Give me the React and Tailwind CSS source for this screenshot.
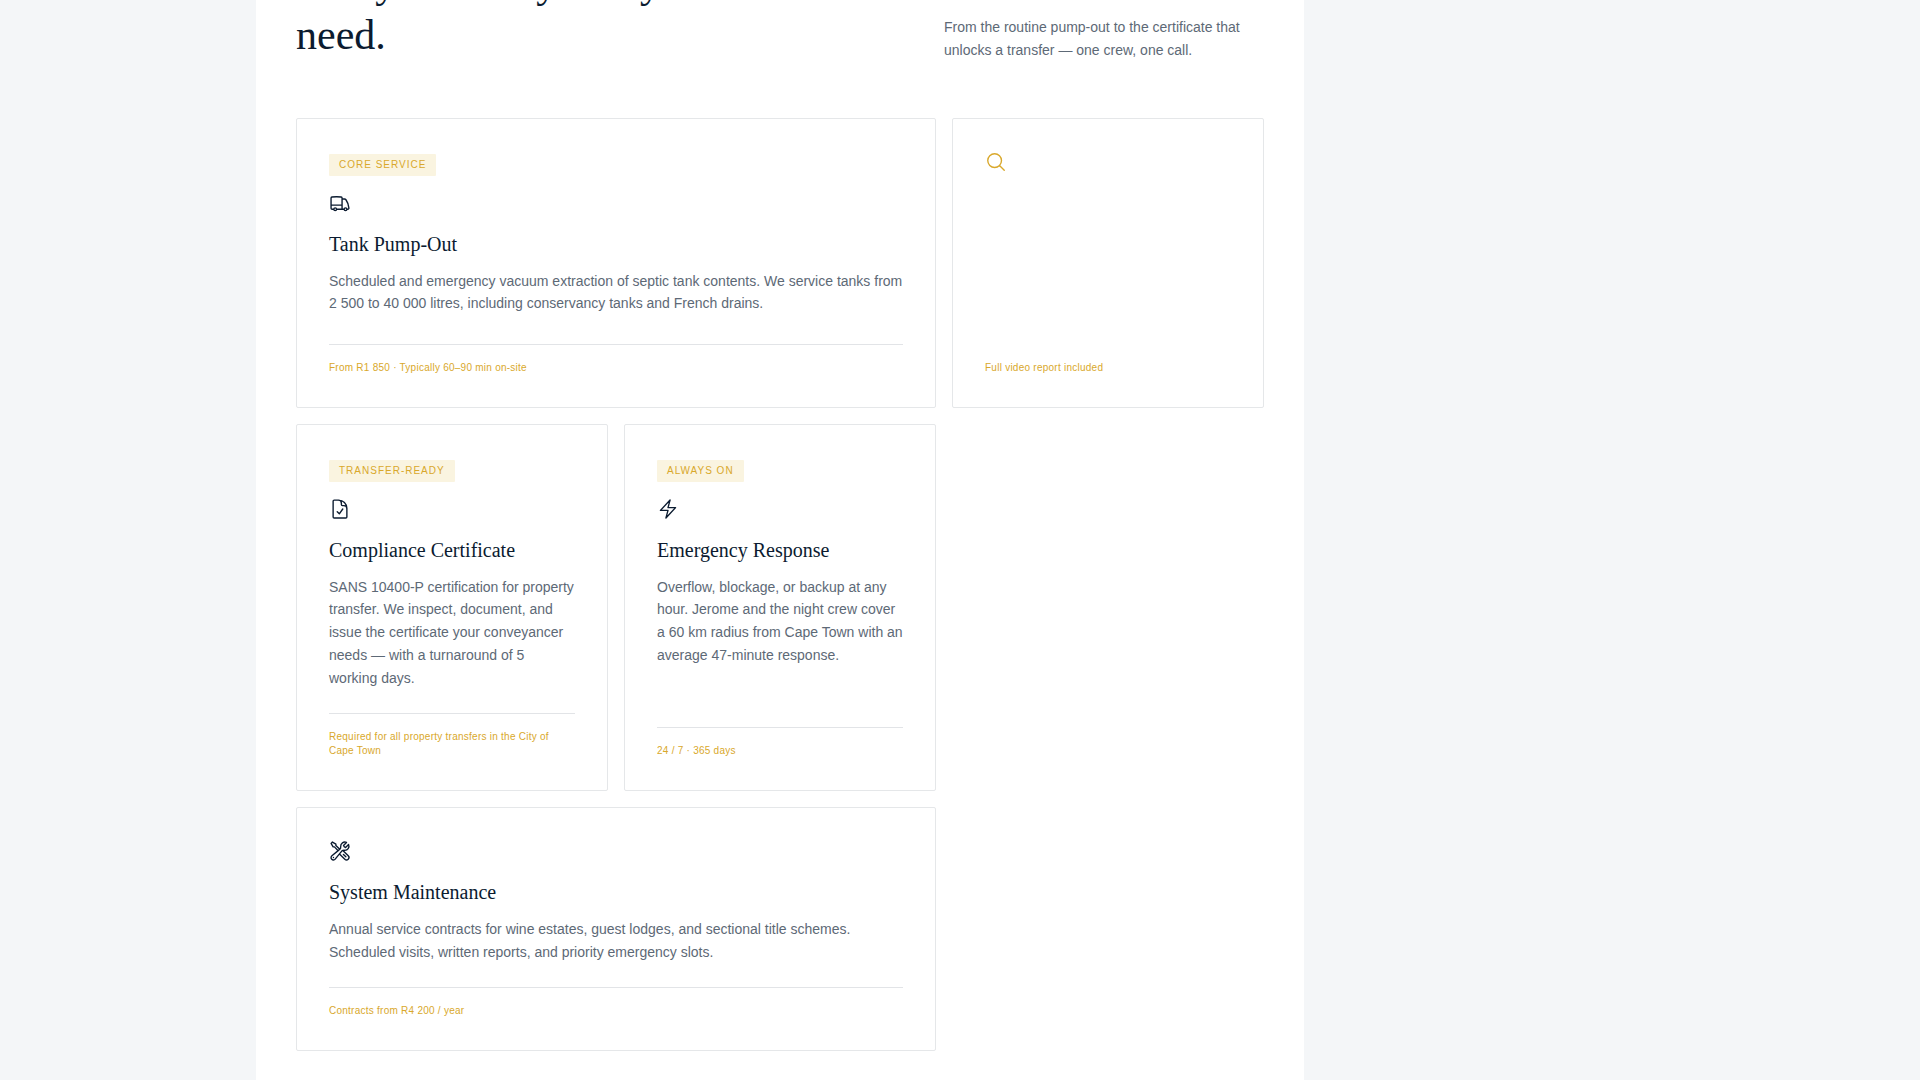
import {
  HiOutlineBolt,
  HiOutlineDocumentCheck,
  HiOutlineMagnifyingGlass,
  HiOutlineTruck,
  HiOutlineWrenchScrewdriver,
} from 'react-icons/hi2';

const services = [
  {
    tag: 'Core service',
    icon: HiOutlineTruck,
    title: 'Tank Pump-Out',
    desc: 'Scheduled and emergency vacuum extraction of septic tank contents. We service tanks from 2 500 to 40 000 litres, including conservancy tanks and French drains.',
    meta: 'From R1 850 · Typically 60–90 min on-site',
    span: 'col-span-2 min-h-[290px]',
  },
  {
    icon: HiOutlineMagnifyingGlass,
    meta: 'Full video report included',
    accent: true,
  },
  {
    tag: 'Transfer-ready',
    icon: HiOutlineDocumentCheck,
    title: 'Compliance Certificate',
    desc: 'SANS 10400-P certification for property transfer. We inspect, document, and issue the certificate your conveyancer needs — with a turnaround of 5 working days.',
    meta: 'Required for all property transfers in the City of Cape Town',
  },
  {
    tag: 'Always on',
    icon: HiOutlineBolt,
    title: 'Emergency Response',
    desc: 'Overflow, blockage, or backup at any hour. Jerome and the night crew cover a 60 km radius from Cape Town with an average 47-minute response.',
    meta: '24 / 7 · 365 days',
  },
  {
    icon: HiOutlineWrenchScrewdriver,
    title: 'System Maintenance',
    desc: 'Annual service contracts for wine estates, guest lodges, and sectional title schemes. Scheduled visits, written reports, and priority emergency slots.',
    meta: 'Contracts from R4 200 / year',
    span: 'col-span-2 col-start-1',
  },
];

const ServiceCard = ({ tag, icon: Icon, title, desc, meta, accent, span = '' }) => (
  <article className={`flex flex-col p-8 rounded-xs border border-[#e5e7e9] ${span}`}>
    {tag && (
      <div className="flex pt-[3px] mb-4">
        <span className="px-2.5 py-[5px] rounded-[1px] bg-[#faf4e0] text-[10px] leading-3 uppercase tracking-widest text-[#d9a82b]">
          {tag}
        </span>
      </div>
    )}
    <Icon className={`size-[22px] shrink-0 ${accent ? 'text-[#d9a82b]' : 'text-[#0b1b30]'}`} />
    {title && (
      <h3 className="mt-[17px] font-['Liberation_Serif',serif] text-xl leading-snug text-[#0b1b30]">{title}</h3>
    )}
    {desc && <p className="mt-[11px] mb-6 text-sm leading-relaxed text-[#5d6976]">{desc}</p>}
    <div className={`mt-auto pt-4 border-t text-[10px] leading-[14px] tracking-wide text-[#d9a82b] ${accent ? 'border-transparent' : 'border-[#e2e4e7]'}`}>
      {meta}
    </div>
  </article>
);

const App = () => {
  return (
    <div className="h-screen overflow-hidden bg-[#f4f6f8] font-['Liberation_Sans',sans-serif]">
      {/* Section heading is scrolled part way past the top edge */}
      <main className="-mt-[43px] ml-64 max-w-[1048px] px-10 pb-24 bg-white">
        <header className="flex items-end justify-between gap-8 pb-14">
          <h2 className="max-w-[640px] pb-px font-['Liberation_Serif',serif] text-[42px] leading-[52px] text-[#0b1b30]">
            Every service your system will ever need.
          </h2>
          <p className="w-80 shrink-0 text-sm leading-[23px] text-[#5d6976]">
            From the routine pump-out to the certificate that unlocks a transfer — one crew, one call.
          </p>
        </header>

        <section className="grid grid-cols-3 gap-4">
          {services.map((service) => (
            <ServiceCard key={service.meta} {...service} />
          ))}
        </section>
      </main>
    </div>
  );
};

export default App;
